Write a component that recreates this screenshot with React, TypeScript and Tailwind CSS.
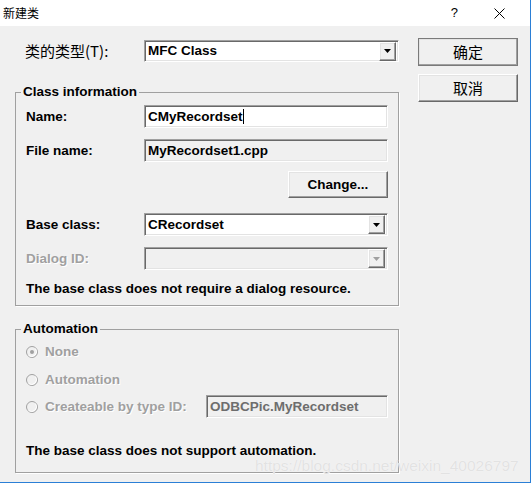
const sunken =
  "border border-t-[#a0a0a0] border-l-[#a0a0a0] border-b-white border-r-white shadow-[inset_1px_1px_0_#696969,inset_-1px_-1px_0_#e3e3e3]";
const raised =
  "border border-t-white border-l-white border-b-[#696969] border-r-[#696969] shadow-[inset_-1px_-1px_0_#a0a0a0,inset_1px_1px_0_#e3e3e3] bg-[#f0f0f0]";
const etched = "border border-[#a0a0a0] shadow-[1px_1px_0_white]";
const disabledText = "text-[#a0a0a0] [text-shadow:1px_1px_0_white]";

function DropButton({ disabled }: { disabled?: boolean }) {
  return (
    <div className={`w-[17px] h-[19px] flex items-center justify-center ${raised}`}>
      <svg width="7" height="4" viewBox="0 0 7 4">
        <path d="M0 0h7L3.5 4z" fill={disabled ? "#a0a0a0" : "#000"} />
      </svg>
    </div>
  );
}

function Combo({ value, disabled, className }: { value?: string; disabled?: boolean; className: string }) {
  return (
    <div
      className={`${className} ${sunken} ${disabled ? "bg-[#f0f0f0]" : "bg-white"} flex items-center pl-[3px] pr-[2px]`}
    >
      <span className="flex-1 font-bold">{value}</span>
      <DropButton disabled={disabled} />
    </div>
  );
}

function Radio({ checked, label }: { checked?: boolean; label: string }) {
  return (
    <div className="flex items-center h-4">
      <svg width="12" height="12" viewBox="0 0 12 12" className="mr-[7px]">
        <circle cx="6" cy="6" r="5.5" fill="#f0f0f0" stroke="#a0a0a0" />
        <path d="M2.5 9.5A5 5 0 0 0 9.5 2.5" fill="none" stroke="#fff" />
        {checked && <circle cx="6" cy="6" r="2" fill="#a0a0a0" />}
      </svg>
      <span className={`font-bold ${disabledText}`}>{label}</span>
    </div>
  );
}

export default function App() {
  return (
    <div className="relative w-[532px] h-[485px] overflow-hidden bg-white font-['Liberation_Sans','Noto_Sans_CJK_SC',sans-serif] text-[13.5px] leading-4 text-black">
      <div className="w-[531px] h-[483px] border-r border-b border-[#2b7fd6] bg-[#f0f0f0] flex flex-col">
        {/* title bar */}
        <div className="h-[26px] bg-white flex items-center pl-[3px] shrink-0">
          <span className="text-[12px] font-['Noto_Sans_CJK_SC',sans-serif]">新建类</span>
          <span className="ml-auto text-[13px] mr-[36px]">?</span>
          <svg width="11" height="11" viewBox="0 0 11 11" className="mr-[25px]">
            <path d="M0.5 0.5l10 10M10.5 0.5l-10 10" stroke="#000" strokeWidth="1" />
          </svg>
        </div>

        <div className="flex pl-[15px]">
          {/* left column */}
          <div className="w-[384px] flex flex-col">
            <div className="flex items-center pt-[14px]">
              <span className="w-[129px] pl-[10px] text-[15px] font-['Noto_Sans_CJK_SC',sans-serif]">类的类型(T):</span>
              <Combo value="MFC Class" className="w-[255px] h-[22px]" />
            </div>

            <fieldset className={`mt-[22px] w-[384px] pb-[8px] ${etched}`}>
              <legend className="ml-[5px] px-[2px] font-bold leading-4">Class information</legend>
              <div className="flex flex-col pl-[10px] pr-[10px]">
                <div className="flex items-center mt-[5px]">
                  <span className="w-[118px] font-bold">Name:</span>
                  <div className={`w-[244px] h-[23px] bg-white flex items-center pl-[3px] ${sunken}`}>
                    <span className="font-bold">CMyRecordset</span>
                    <span className="w-px h-[15px] bg-black" />
                  </div>
                </div>
                <div className="flex items-center mt-[11px]">
                  <span className="w-[118px] font-bold">File name:</span>
                  <div className={`w-[244px] h-[23px] flex items-center pl-[3px] ${sunken}`}>
                    <span className="font-bold">MyRecordset1.cpp</span>
                  </div>
                </div>
                <div className="flex justify-end mt-[9px]">
                  <div className={`w-[100px] h-[27px] flex items-center justify-center font-bold ${raised}`}>
                    Change...
                  </div>
                </div>
                <div className="flex items-center mt-[15px]">
                  <span className="w-[118px] font-bold">Base class:</span>
                  <Combo value="CRecordset" className="w-[244px] h-[23px]" />
                </div>
                <div className="flex items-center mt-[11px]">
                  <span className={`w-[118px] font-bold ${disabledText}`}>Dialog ID:</span>
                  <Combo disabled className="w-[244px] h-[23px]" />
                </div>
                <p className="mt-[11px] font-bold">The base class does not require a dialog resource.</p>
              </div>
            </fieldset>

            <fieldset className={`mt-[15px] w-[384px] pb-[13px] ${etched}`}>
              <legend className="ml-[5px] px-[2px] font-bold leading-4">Automation</legend>
              <div className="flex flex-col pl-[10px] pr-[10px]">
                <div className="mt-[7px]">
                  <Radio checked label="None" />
                </div>
                <div className="mt-[12px]">
                  <Radio label="Automation" />
                </div>
                <div className="flex items-center justify-between mt-[7px]">
                  <Radio label="Createable by type ID:" />
                  <div className={`w-[182px] h-[23px] flex items-center pl-[3px] ${sunken}`}>
                    <span className="font-bold text-[#6d6d6d]">ODBCPic.MyRecordset</span>
                  </div>
                </div>
                <p className="mt-[25px] font-bold">The base class does not support automation.</p>
              </div>
            </fieldset>
          </div>

          {/* right column */}
          <div className="ml-[19px] pt-[12px] flex flex-col gap-[8px]">
            <div
              className={`w-[100px] h-[28px] flex items-center justify-center text-[15px] font-['Noto_Sans_CJK_SC',sans-serif] ${raised} outline outline-1 outline-[#7a7a7a] -outline-offset-1`}
            >
              确定
            </div>
            <div
              className={`w-[100px] h-[28px] flex items-center justify-center text-[15px] font-['Noto_Sans_CJK_SC',sans-serif] ${raised}`}
            >
              取消
            </div>
          </div>
        </div>
      </div>

      {/* watermark */}
      <span className="absolute left-[255px] top-[456px] whitespace-nowrap text-[15.5px] leading-5 text-[#e2e2e2] [text-shadow:0_0_1px_#ffffff]">
        https://blog.csdn.net/weixin_40026797
      </span>
    </div>
  );
}
